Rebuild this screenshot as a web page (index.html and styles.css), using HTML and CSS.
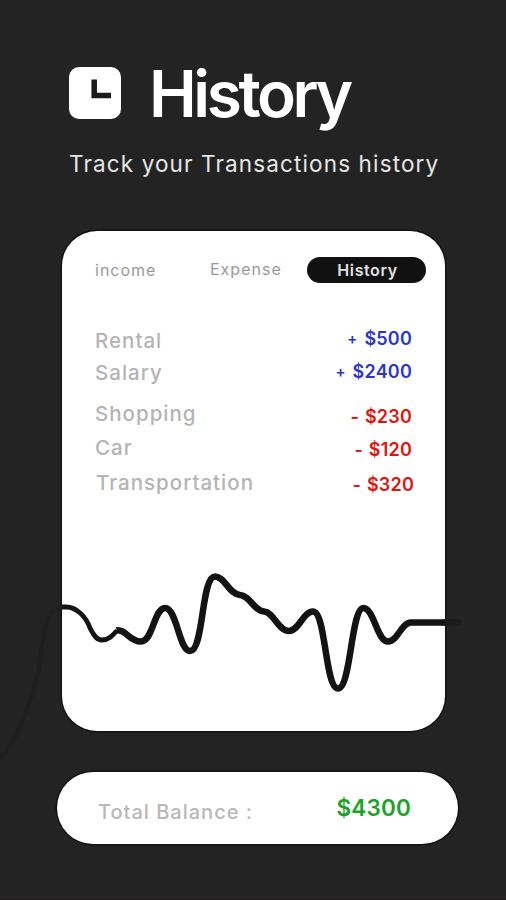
FILE: index.html
```html
<!DOCTYPE html>
<html lang="en">
<head>
<meta charset="utf-8">
<title>History</title>
<link rel="stylesheet" href="styles.css">
</head>
<body>
<main class="screen">
  <header class="header">
    <div class="brand">
      <svg class="clock" viewBox="0 0 52 52" aria-hidden="true">
        <rect width="52" height="52" rx="10" fill="#fff"/>
        <path d="M25.200 12.500V28.500H42" fill="none" stroke="#1b1b1b" stroke-width="5.500"/>
      </svg>
      <h1 class="title">History</h1>
    </div>
    <p class="subtitle">Track your Transactions history</p>
  </header>

  <section class="card">
    <nav class="tabs">
      <span class="tab tab-income">income</span>
      <span class="tab tab-expense">Expense</span>
      <span class="tab tab-active">History</span>
    </nav>
    <ul class="list">
      <li class="row rental"><span class="label">Rental</span><span class="amount plus"><i class="sign">+</i><b class="value">$500</b></span></li>
      <li class="row salary"><span class="label">Salary</span><span class="amount plus"><i class="sign">+</i><b class="value">$2400</b></span></li>
      <li class="row shopping"><span class="label">Shopping</span><span class="amount minus"><i class="sign">-</i><b class="value">$230</b></span></li>
      <li class="row car"><span class="label">Car</span><span class="amount minus"><i class="sign">-</i><b class="value">$120</b></span></li>
      <li class="row transport"><span class="label">Transportation</span><span class="amount minus"><i class="sign">-</i><b class="value">$320</b></span></li>
    </ul>
    <svg class="chart" viewBox="0 560 506 210" fill="none" aria-hidden="true">
      <path d="M-2 760C22 738 39 680 43 640C45 620 52 607 62 607" stroke="#1f1f1f" stroke-width="4"/>
      <path d="M445 622.5H458" stroke="#1c1c1c" stroke-width="6.5" stroke-linecap="round"/>
      <path d="M62 607H66C77 607 86 617 90 628C94 636 97 640 102 640C109 640 113 635 117 630.500" stroke="#131313" stroke-width="4.800"/>
      <path d="M116.500 630.300C126 629 129 641.500 141 641.500C153 641.500 154 608 165 608C177 608 179 651 190 651C204 651 201 576.500 215 576.500C225 576.500 229 594.500 240 595C250 595.500 254 611 264 611.500C274 612 278 631 289 631C299 631 303 611.500 313 611.500C326 611.500 325 688.500 338 688.500C351 688.500 351 608 363.500 608C374 608 377 641.500 388 641.500C398 641.500 401 622.500 411 622.500H445" stroke="#131313" stroke-width="6.500"/>
    </svg>
  </section>

  <section class="balance">
    <span class="balance-label">Total Balance :</span>
    <span class="balance-value">$4300</span>
  </section>
</main>
</body>
</html>
```
FILE: styles.css
```css
* { box-sizing: border-box; margin: 0; padding: 0; }

body {
  background: #232323;
  font-family: Inter, "Liberation Sans", sans-serif;
  overflow: hidden;
}

.screen {
  width: 506px;
  height: 900px;
  display: flex;
  flex-direction: column;
  background: #232323;
  border-bottom: 1px solid #1f1a1c;
  overflow: hidden;
}

.header { height: 231px; padding: 67px 0 0 69px; }
.brand { display: flex; align-items: flex-start; height: 72px; }
.clock { width: 52px; height: 52px; margin-right: 28px; }
.title {
  color: #fff;
  font-size: 64px;
  font-weight: 600;
  line-height: 54px;
  letter-spacing: -3.4px;
}
.subtitle {
  margin-top: 12px;
  color: #e6e6e6;
  font-size: 22.5px;
  font-weight: 400;
  line-height: 25px;
  letter-spacing: 1.13px;
  white-space: nowrap;
}

.card {
  width: 383px;
  height: 500px;
  margin-left: 62px;
  border-radius: 35px;
  background: #fff;
  box-shadow: 0 0 0 1.5px #131313;
}

.tabs { display: flex; align-items: flex-start; height: 96px; padding: 26px 0 0 33px; }
.tab { color: #9a9a9a; font-size: 16px; line-height: 26px; letter-spacing: 1px; }
.tab-income { width: 115px; }
.tab-expense { width: 97px; line-height: 24px; }
.tab-active {
  width: 119px;
  height: 26px;
  padding-left: 2px;
  border-radius: 13px;
  background: #111;
  color: #e2e2e2;
  font-weight: 600;
  letter-spacing: 0.6px;
  text-align: center;
}

.list { list-style: none; height: 212px; }
.row {
  display: flex;
  justify-content: space-between;
  align-items: flex-start;
  padding: 2px 33px 0 33px;
  height: 32px;
}
.label { color: #b4b4b4; font-size: 20.5px; font-weight: 500; line-height: 24px; letter-spacing: 1px; }
.amount { display: flex; font-size: 18px; line-height: 24px; }
.value { font-weight: 600; letter-spacing: 0.2px; }
.sign { font-style: normal; font-weight: 600; margin-right: 7px; }
.plus { color: #2a35d0; }
.plus .sign { font-size: 15px; }
.minus { color: #e3120b; }

.salary { height: 41px; }
.shopping { height: 34px; }
.car { height: 36px; }
.rental .amount { margin-top: -2px; }
.salary .amount { margin-top: -1px; }
.shopping .amount { margin-top: 3px; }
.car .amount, .transport .amount { margin-top: 2px; }
.transport { padding: 1px 31px 0 34px; }
.minus .sign { margin-right: 6px; }

.chart { display: block; width: 506px; height: 210px; margin: 21px 0 0 -62px; overflow: visible; }

.balance {
  display: flex;
  justify-content: space-between;
  align-items: flex-start;
  width: 401px;
  height: 72px;
  margin: 41px 0 0 57px;
  padding: 24px 47px 0 41px;
  border-radius: 36px;
  background: #fff;
  box-shadow: 0 0 0 1.5px #131313;
}
.balance-label { margin-top: 4px; color: #b8b8b8; font-size: 20px; font-weight: 500; line-height: 24px; letter-spacing: 1px; }
.balance-value { color: #1ba324; font-size: 22.5px; font-weight: 600; line-height: 24px; letter-spacing: 0.2px; }
```
